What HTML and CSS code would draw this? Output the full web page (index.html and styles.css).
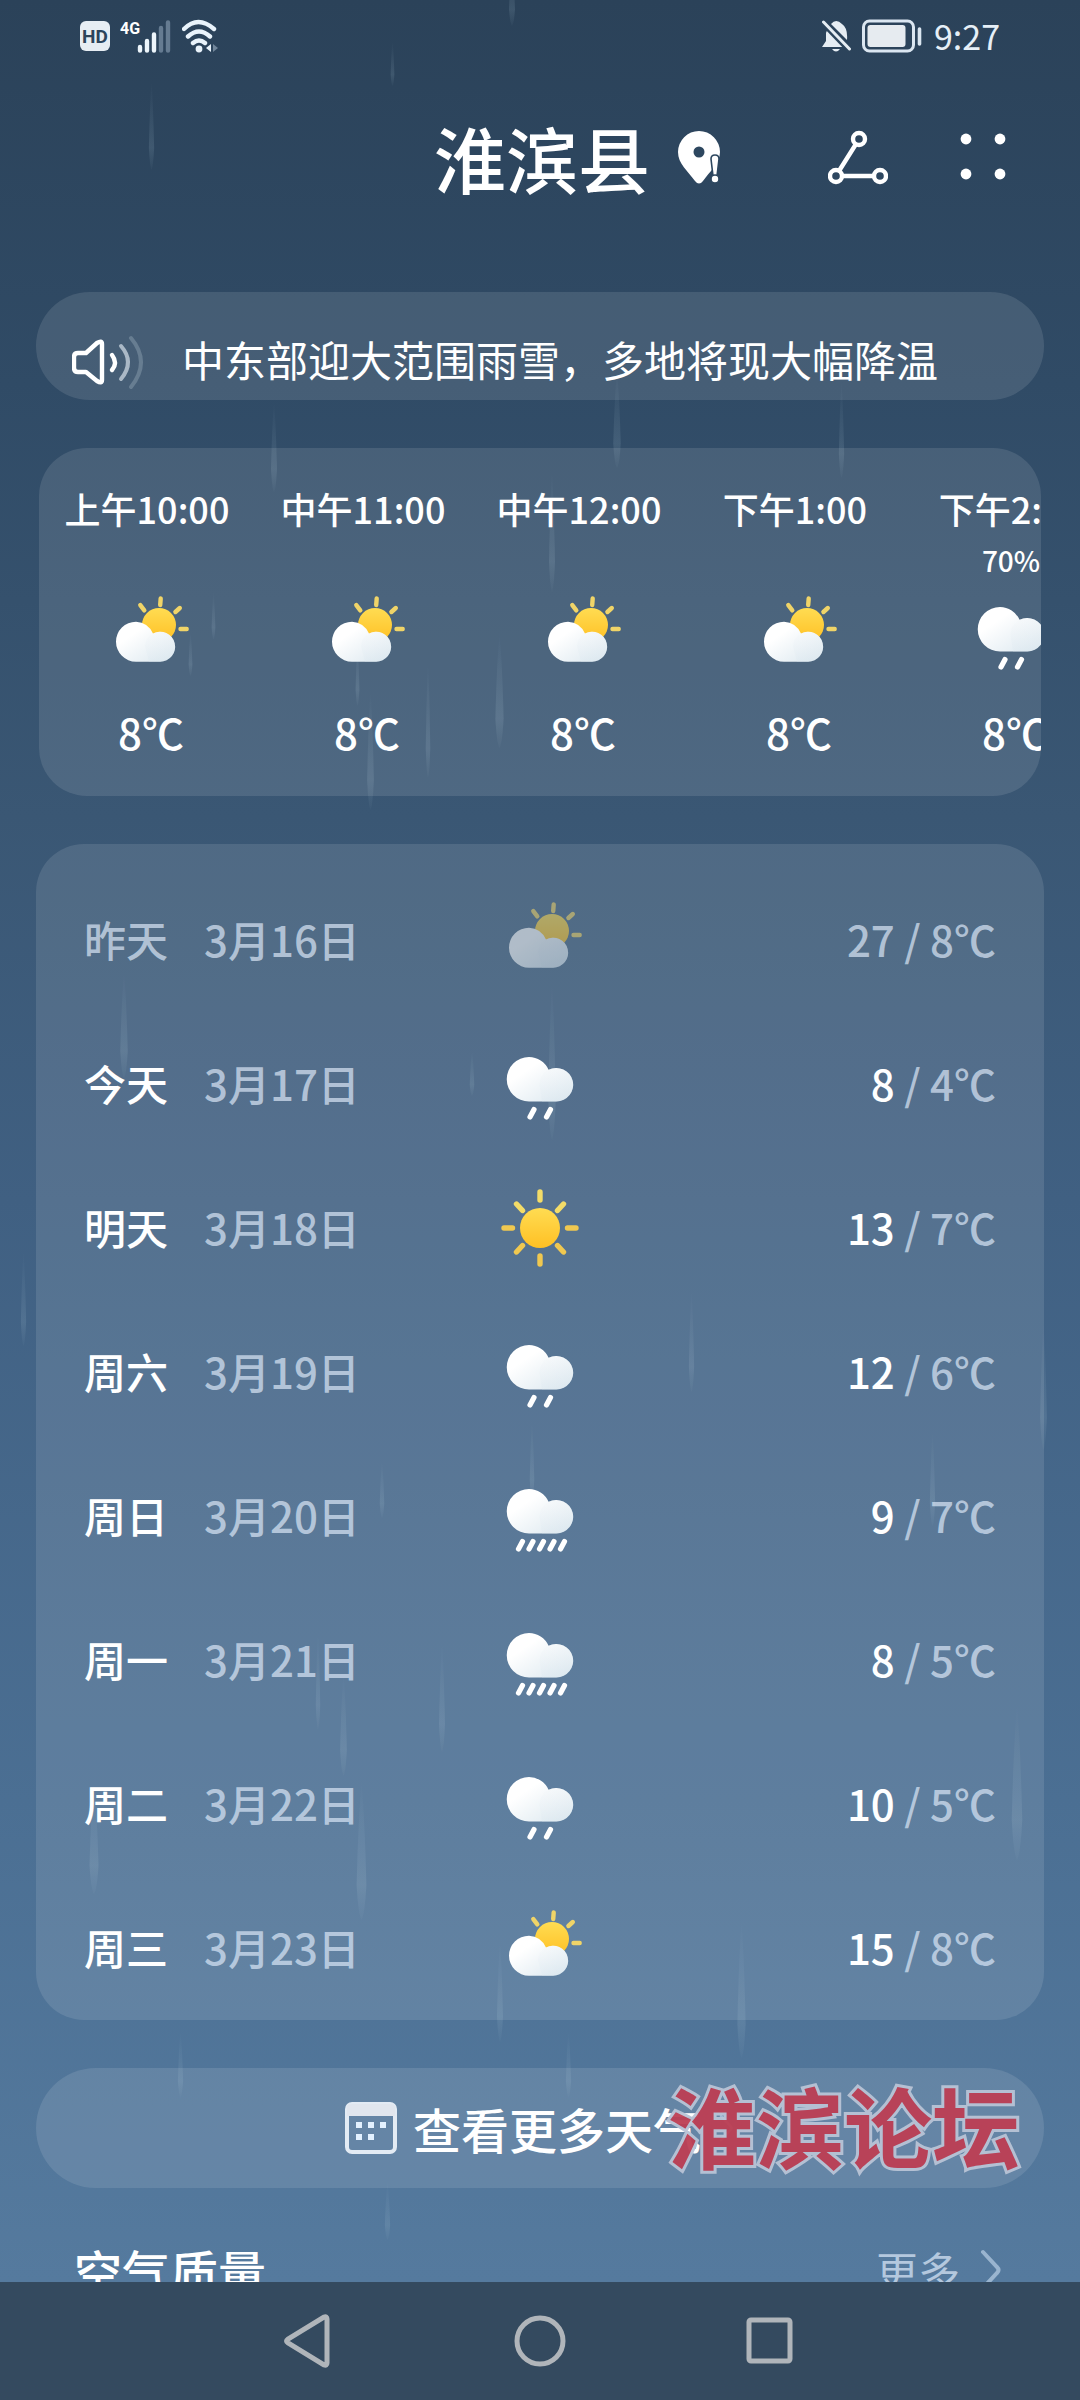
FILE: index.html
```html
<!DOCTYPE html>
<html lang="zh-CN">
<head>
    <meta charset="UTF-8">
    <meta name="viewport" content="width=device-width, initial-scale=1.0">
    <title>淮滨县 天气</title>
    <link rel="stylesheet" href="styles.css">
</head>
<body>
    <!-- Shared weather icons -->
    <svg class="defs" width="0" height="0" aria-hidden="true">
        <defs>
            <linearGradient id="sun-fill" x1="0" y1="0" x2="0" y2="1">
                <stop offset="0" stop-color="#ffdc52"/>
                <stop offset="1" stop-color="#ffc024"/>
            </linearGradient>
            <linearGradient id="cloud-fill" x1="0" y1="0" x2="1" y2="1">
                <stop offset="0.3" stop-color="#ffffff"/>
                <stop offset="1" stop-color="#d9e6ee"/>
            </linearGradient>
            <linearGradient id="puff-fill" x1="0" y1="0" x2="0" y2="1">
                <stop offset="0" stop-color="#f6f8fa"/>
                <stop offset="1" stop-color="#dbe7ef"/>
            </linearGradient>
            <linearGradient id="streak-fill" x1="0" y1="0" x2="0" y2="1">
                <stop offset="0" stop-color="#a9c4d4" stop-opacity="0"/>
                <stop offset="0.75" stop-color="#a9c4d4" stop-opacity="0.15"/>
                <stop offset="1" stop-color="#a9c4d4" stop-opacity="0.03"/>
            </linearGradient>
        </defs>
        <symbol id="partly" viewBox="0 0 96 96">
            <circle cx="60" cy="37" r="17" fill="url(#sun-fill)"/>
            <path d="M61.2 17l.5-6.500M45.300 22.300l-4-5.200M76.400 24l4.400-4M81.500 41h6.200" fill="none" stroke="#f0d468" stroke-width="4.400" stroke-linecap="round"/>
            <path d="M37 33.700a20 20 0 0 1 17 11.800a15 15 0 1 1 6.900 28.200H37a20 20 0 0 1 0-40z" fill="url(#cloud-fill)"/>
            <path d="M46 58a15 15 0 0 1 8-12.500a15 15 0 1 1 6.900 28.200H50z" fill="url(#puff-fill)" opacity="0.35"/>
        </symbol>
        <symbol id="cloud" viewBox="0 0 96 96">
            <path d="M37 19a22.200 22.200 0 0 1 19.600 12.800a16.800 16.800 0 1 1 7.700 31.700H37a22.200 22.200 0 0 1 0-44.500z" fill="url(#cloud-fill)"/>
            <path d="M47.500 47a17 17 0 0 1 9.100-15.200a16.800 16.800 0 1 1 7.700 31.700H50z" fill="url(#puff-fill)" opacity="0.35"/>
        </symbol>
        <symbol id="rain" viewBox="0 0 96 96">
            <use href="#cloud"/>
            <path d="M42 71.500l-4 7.500M58.500 71.500l-4 7.500" stroke="#fff" stroke-width="5.200" stroke-linecap="round"/>
        </symbol>
        <symbol id="heavy" viewBox="0 0 96 96">
            <use href="#cloud"/>
            <path d="M30.500 71.500l-4 7.500M41 71.500l-4 7.500M51.500 71.500l-4 7.500M62 71.500l-4 7.500M72.500 71.500l-4 7.500" stroke="#fff" stroke-width="5.200" stroke-linecap="round"/>
        </symbol>
        <symbol id="sunny" viewBox="0 0 96 96">
            <circle cx="48" cy="46" r="20" fill="url(#sun-fill)"/>
            <path d="M48 10v8M30.500 28.500l-6-6.500M65.500 28.500l6-6.500" stroke="#f3dc68" stroke-width="5.400" stroke-linecap="round"/>
            <path d="M12 46h8.500M75.500 46h8.500M30.500 63.500l-6 6.500M65.500 63.500l6 6.500M48 74v8" stroke="#f0c850" stroke-width="5.400" stroke-linecap="round"/>
        </symbol>
        <symbol id="chevron" viewBox="0 0 24 44">
            <path d="M3 4l14 15q3 3 0 6L3 40" fill="none" stroke="currentColor" stroke-width="4" stroke-linecap="round"/>
        </symbol>
        <symbol id="drop" viewBox="0 0 8 100" preserveAspectRatio="none">
            <path d="M4 0Q6 30 7 75Q6 96 4 100Q2 96 1 75Q2 30 4 0z" fill="url(#streak-fill)"/>
        </symbol>
    </svg>

    <!-- Rain behind the cards -->
    <svg class="rain" viewBox="0 0 1080 2400" preserveAspectRatio="xMidYMin slice" aria-hidden="true">
        <use href="#drop" x="148" y="80" width="7" height="90"/>
        <use href="#drop" x="508" y="-40" width="8" height="66"/>
        <use href="#drop" x="390" y="40" width="5" height="46"/>
        <use href="#drop" x="270" y="400" width="8" height="92"/>
        <use href="#drop" x="612" y="370" width="10" height="98"/>
        <use href="#drop" x="838" y="380" width="7" height="98"/>
        <use href="#drop" x="548" y="470" width="8" height="122"/>
        <use href="#drop" x="211" y="590" width="5" height="50"/>
        <use href="#drop" x="188" y="630" width="5" height="46"/>
        <use href="#drop" x="355" y="640" width="5" height="66"/>
        <use href="#drop" x="366" y="690" width="9" height="120"/>
        <use href="#drop" x="425" y="660" width="6" height="118"/>
        <use href="#drop" x="494" y="630" width="11" height="118"/>
        <use href="#drop" x="119" y="970" width="10" height="108"/>
        <use href="#drop" x="547" y="980" width="10" height="160"/>
        <use href="#drop" x="469" y="1050" width="6" height="46"/>
        <use href="#drop" x="20" y="1250" width="7" height="96"/>
        <use href="#drop" x="688" y="1290" width="7" height="102"/>
        <use href="#drop" x="1039" y="1320" width="9" height="130"/>
        <use href="#drop" x="529" y="1420" width="6" height="80"/>
        <use href="#drop" x="929" y="1430" width="7" height="96"/>
        <use href="#drop" x="379" y="1460" width="6" height="58"/>
        <use href="#drop" x="315" y="1630" width="6" height="100"/>
        <use href="#drop" x="339" y="1670" width="9" height="106"/>
        <use href="#drop" x="438" y="1640" width="8" height="112"/>
        <use href="#drop" x="1010" y="1700" width="14" height="160"/>
        <use href="#drop" x="88" y="1780" width="12" height="114"/>
        <use href="#drop" x="355" y="1780" width="13" height="140"/>
        <use href="#drop" x="496" y="1940" width="8" height="102"/>
        <use href="#drop" x="736" y="1920" width="11" height="138"/>
        <use href="#drop" x="565" y="2030" width="7" height="68"/>
        <use href="#drop" x="177" y="2030" width="7" height="68"/>
        <use href="#drop" x="384" y="2180" width="7" height="60"/>
    </svg>

    <div class="status-bar">
        <div class="status-group">
            <svg width="30" height="32" viewBox="0 0 30 32" role="img" aria-label="HD">
                <rect y="1" width="30" height="30" rx="6" fill="#e6edf3"/>
                <text x="15" y="23" class="hd-text">HD</text>
            </svg>
            <svg width="52" height="34" viewBox="0 0 52 34" role="img" aria-label="4G">
                <text x="0" y="15" class="net-text">4G</text>
                <path d="M20 28v3.500M27 22v9.500M34 15.500v16" stroke="#edf5fb" stroke-width="4.400" stroke-linecap="round"/>
                <path d="M41 9v22.500M48 3.500v28" stroke="#657b91" stroke-width="4.400" stroke-linecap="round"/>
            </svg>
            <svg width="38" height="34" viewBox="0 0 38 34" aria-hidden="true">
                <path d="M2 10q14-14 30 0M6 17.500q11-10 22 0M11 24q6-5 12 0" fill="none" stroke="#e9f3fb" stroke-width="4.400" stroke-linecap="round"/>
                <circle cx="17" cy="30" r="3.400" fill="#e9f3fb"/>
                <path d="M29 25v8l-5-4z" fill="#e9f3fb"/>
                <path d="M31 25l5 4-5 4z" fill="#71869a"/>
            </svg>
        </div>
        <div class="status-group">
            <svg width="30" height="34" viewBox="0 0 30 34" aria-hidden="true">
                <path d="M4 14q1-3 2-4l19 18H0l4-6z" fill="#e6edf3"/>
                <path d="M9 5q5-6 11 0q6 4 5 16z" fill="#e6edf3"/>
                <path d="M1 3l27 28" stroke="#2c445b" stroke-width="7"/>
                <path d="M1.500 3l26 27" stroke="#e6edf3" stroke-width="3" stroke-linecap="round"/>
                <path d="M10 30h8q-4 5-8 0z" fill="#e6edf3"/>
            </svg>
            <svg width="60" height="34" viewBox="0 0 60 34" aria-hidden="true">
                <rect x="1.500" y="2" width="50" height="30" rx="6" fill="none" stroke="#dbe6f1" stroke-width="3"/>
                <rect x="5.500" y="6" width="38" height="22" rx="3" fill="#e6ebf0"/>
                <path d="M57.500 10v15" stroke="#dbe6f1" stroke-width="3.600" stroke-linecap="round"/>
            </svg>
            <time class="clock">9:27</time>
        </div>
    </div>

    <header class="city-bar">
        <h1 class="city">淮滨县</h1>
        <svg class="pin" width="44" height="54" viewBox="0 0 44 54" aria-hidden="true">
            <path d="M21 1a21 21 0 0 1 21 21c0 12-11 20-17 29q-4 5-8 0C10 41 0 34 0 22A21 21 0 0 1 21 1z" fill="#fff"/>
            <circle cx="21" cy="22" r="5.500" fill="#2d475f"/>
            <path d="M33 29q0-4 4-4t4 4l-2 17h-4z" fill="#fff" stroke="#2d475f" stroke-width="1.600"/>
            <circle cx="37" cy="49" r="4" fill="#fff" stroke="#2d475f" stroke-width="1.600"/>
        </svg>
        <button class="icon-button share" type="button" aria-label="分享">
            <svg width="60" height="56" viewBox="0 0 60 56">
                <g fill="none" stroke="#fff" stroke-width="4.400">
                    <circle cx="31" cy="10" r="6"/>
                    <circle cx="8" cy="47" r="6"/>
                    <circle cx="52" cy="47" r="6"/>
                    <path d="M28 15L11 42M14 47h32"/>
                </g>
            </svg>
        </button>
        <button class="icon-button" type="button" aria-label="更多选项">
            <svg width="46" height="48" viewBox="0 0 46 48" fill="#fff">
                <circle cx="6" cy="6" r="5.400"/>
                <circle cx="40" cy="6" r="5.400"/>
                <circle cx="6" cy="41" r="5.400"/>
                <circle cx="40" cy="41" r="5.400"/>
            </svg>
        </button>
    </header>

    <main class="content">
        <a class="card news" href="#news">
            <svg width="72" height="56" viewBox="0 0 72 56" fill="none" stroke-linecap="round" stroke-linejoin="round" aria-hidden="true">
                <path d="M6 19h8L25 9q5-3 5 1v36q0 4-5 1L14 38H6q-4 0-4-4V23q0-4 4-4z" stroke="#fff" stroke-width="4.400"/>
                <path d="M40 21q6 8 0 15" stroke="#fff" stroke-width="4.400"/>
                <path d="M49 12q14 16 0 33" stroke="#aab8c6" stroke-width="4"/>
                <path d="M59 4q20 24 0 49" stroke="#677d91" stroke-width="4"/>
            </svg>
            <span>中东部迎大范围雨雪，多地将现大幅降温</span>
        </a>

        <ul class="card hourly">
            <li class="hour"><span class="label">上午10:00</span><span class="chance"></span><svg class="icon"><use href="#partly"/></svg><span class="temp">8℃</span></li>
            <li class="hour"><span class="label">中午11:00</span><span class="chance"></span><svg class="icon"><use href="#partly"/></svg><span class="temp">8℃</span></li>
            <li class="hour"><span class="label">中午12:00</span><span class="chance"></span><svg class="icon"><use href="#partly"/></svg><span class="temp">8℃</span></li>
            <li class="hour"><span class="label">下午1:00</span><span class="chance"></span><svg class="icon"><use href="#partly"/></svg><span class="temp">8℃</span></li>
            <li class="hour"><span class="label">下午2:00</span><span class="chance">70%</span><svg class="icon"><use href="#rain"/></svg><span class="temp">8℃</span></li>
        </ul>

        <ul class="card daily">
            <li class="day past"><div><b>昨天</b><span>3月16日</span></div><svg class="icon"><use href="#partly"/></svg><p><b>27</b> / 8℃</p></li>
            <li class="day"><div><b>今天</b><span>3月17日</span></div><svg class="icon"><use href="#rain"/></svg><p><b>8</b> / 4℃</p></li>
            <li class="day"><div><b>明天</b><span>3月18日</span></div><svg class="icon"><use href="#sunny"/></svg><p><b>13</b> / 7℃</p></li>
            <li class="day"><div><b>周六</b><span>3月19日</span></div><svg class="icon"><use href="#rain"/></svg><p><b>12</b> / 6℃</p></li>
            <li class="day"><div><b>周日</b><span>3月20日</span></div><svg class="icon"><use href="#heavy"/></svg><p><b>9</b> / 7℃</p></li>
            <li class="day"><div><b>周一</b><span>3月21日</span></div><svg class="icon"><use href="#heavy"/></svg><p><b>8</b> / 5℃</p></li>
            <li class="day"><div><b>周二</b><span>3月22日</span></div><svg class="icon"><use href="#rain"/></svg><p><b>10</b> / 5℃</p></li>
            <li class="day"><div><b>周三</b><span>3月23日</span></div><svg class="icon"><use href="#partly"/></svg><p><b>15</b> / 8℃</p></li>
        </ul>

        <div class="more-wrap">
            <button class="card more-button" type="button">
                <svg width="52" height="52" viewBox="0 0 52 52" aria-hidden="true">
                    <rect x="2" y="2" width="48" height="48" rx="5" fill="none" stroke="#e3ebf4" stroke-width="4"/>
                    <path d="M2 6q0-4 4-4h40q4 0 4 4v8H2z" fill="#e1e6ee"/>
                    <path d="M11 20h6v6h-6zM23 20h6v6h-6zM35 20h6v6h-6zM11 32h6v6h-6zM23 32h6v6h-6z" fill="#e3f1ff"/>
                </svg>
                <span>查看更多天气</span>
                <svg class="chevron" width="16" height="32"><use href="#chevron"/></svg>
            </button>
            <span class="watermark">淮滨论坛</span>
        </div>

        <section class="air">
            <h2>空气质量</h2>
            <a href="#air">更多 <svg class="chevron" width="24" height="44"><use href="#chevron"/></svg></a>
        </section>
    </main>

    <nav class="nav-bar">
        <button class="icon-button" type="button" aria-label="返回">
            <svg width="60" height="60" viewBox="0 0 60 60"><path d="M47 8v44q0 3-3 2L8 32q-3-2 0-4L44 6q3-1 3 2z" class="nav-shape"/></svg>
        </button>
        <button class="icon-button" type="button" aria-label="主页">
            <svg width="60" height="60" viewBox="0 0 60 60"><circle cx="30" cy="30" r="23" class="nav-shape"/></svg>
        </button>
        <button class="icon-button" type="button" aria-label="最近任务">
            <svg width="60" height="60" viewBox="0 0 60 60"><rect x="9" y="9" width="41" height="41" rx="2" class="nav-shape"/></svg>
        </button>
    </nav>
</body>
</html>
```
FILE: styles.css
```css
* {
    box-sizing: border-box;
}
body {
    font-family: "Noto Sans CJK SC", sans-serif;
    font-size: 42px;
    margin: 0;
    height: 100vh;
    display: flex;
    flex-direction: column;
    position: relative;
    overflow: hidden;
    color: #fff;
    background: linear-gradient(to bottom, #2b4259 0%, #304b66 16%, #3a5774 34%, #406082 50%, #4b6f93 75%, #557a9e 95%);
}
h1, h2, p, ul {
    margin: 0;
    padding: 0;
    font-weight: 500;
}
ul {
    list-style: none;
}
a {
    color: inherit;
    text-decoration: none;
}
b {
    font-weight: 500;
}
.defs {
    position: absolute;
}
.rain {
    position: absolute;
    top: 0;
    left: 0;
    width: 100%;
    height: 100%;
}

/* Status bar */
.status-bar {
    position: relative;
    display: flex;
    justify-content: space-between;
    height: 72px;
    padding: 0 80px;
}
.status-group {
    display: flex;
    align-items: center;
    gap: 10px;
}
.hd-text {
    font: bold 19px Roboto, sans-serif;
    fill: #2c445b;
    text-anchor: middle;
}
.net-text {
    font: bold 16px Roboto, sans-serif;
    fill: #fff;
}
.clock {
    font-size: 34px;
    line-height: 40px;
    color: #e6eff7;
    margin-left: 2px;
}

/* City title */
.city-bar {
    position: relative;
    display: flex;
    align-items: center;
    justify-content: flex-end;
    height: 170px;
    padding-right: 74px;
}
.city {
    font-size: 72px;
    line-height: 108px;
}
.pin {
    margin-left: 28px;
}
.icon-button {
    display: flex;
    padding: 0;
    border: 0;
    background: none;
}
.share {
    margin: 0 72px 0 106px;
}

/* Cards */
.content {
    position: relative;
    flex: 1;
    min-height: 0;
    overflow: hidden;
    padding: 50px 36px 0;
}
.card {
    border-radius: 48px;
    background: rgba(255, 255, 255, 0.11);
}
.icon {
    width: 96px;
    height: 96px;
}
.news {
    display: flex;
    align-items: center;
    gap: 38px;
    height: 108px;
    padding: 32px 36px 0;
    border-radius: 54px;
}
.news span {
    padding-bottom: 8px;
}

.hourly {
    display: flex;
    overflow: hidden;
    margin: 48px 3px;
    padding: 34px 0 38px;
}
.hour {
    flex: 0 0 216px;
    display: flex;
    flex-direction: column;
    align-items: center;
    line-height: 52px;
}
.label {
    font-size: 36px;
}
.chance {
    height: 54px;
    font-size: 28px;
}
.temp {
    font-weight: 500;
    margin-top: 22px;
    padding-left: 8px;
}

.daily {
    display: flex;
    flex-direction: column;
    gap: 24px;
    padding: 38px 48px 10px;
    color: rgba(220, 232, 248, 0.7);
}
.day {
    display: grid;
    grid-template-columns: 1fr 96px 1fr;
    align-items: center;
    height: 120px;
    line-height: 60px;
}
.day div, .day p {
    padding-bottom: 6px;
}
.day b {
    color: #fff;
}
.day div b {
    margin-right: 36px;
}
.day p {
    text-align: right;
}
.day.past b {
    color: inherit;
}
.past .icon {
    opacity: 0.55;
}

.more-wrap {
    position: relative;
    margin-top: 48px;
}
.more-button {
    display: flex;
    align-items: center;
    justify-content: center;
    width: 100%;
    height: 120px;
    padding: 0;
    border: 0;
    border-radius: 60px;
    color: #fff;
    font: 500 48px "Noto Sans CJK SC", sans-serif;
}
.more-button span {
    margin: 0 18px 0 16px;
}
.chevron {
    color: rgba(200, 220, 240, 0.6);
}
.watermark {
    position: absolute;
    top: 0;
    right: 24px;
    font-size: 88px;
    font-weight: 700;
    line-height: 112px;
    color: #bd3f54;
    -webkit-text-stroke: 6px #b9c4d6;
    paint-order: stroke fill;
    opacity: 0.95;
    pointer-events: none;
}

.air {
    display: flex;
    justify-content: space-between;
    align-items: center;
    margin-top: 46px;
    padding: 0 40px 0 38px;
    line-height: 72px;
}
.air h2 {
    font-size: 48px;
}
.air a {
    display: flex;
    align-items: center;
    gap: 20px;
    color: #b4c8de;
}

/* System navigation */
.nav-bar {
    position: relative;
    display: flex;
    align-items: center;
    justify-content: center;
    gap: 170px;
    height: 118px;
    background: #344a5f;
}
.nav-shape {
    fill: none;
    stroke: #b0b5ba;
    stroke-width: 5px;
}
```
